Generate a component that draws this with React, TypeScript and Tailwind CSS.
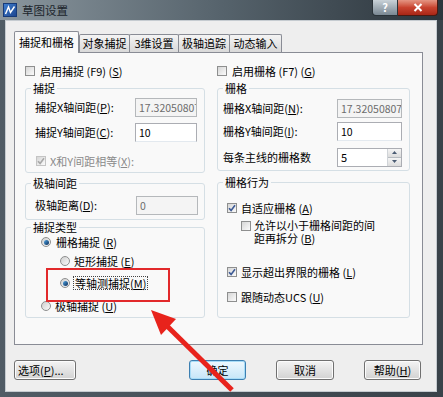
import React from "react"

const Key = ({ k }: { k: string }) => (
  <>
    (<span className="underline">{k}</span>)
  </>
)

function Check({ checked = false, disabled = false }: { checked?: boolean; disabled?: boolean }) {
  return (
    <div
      className={`w-[10px] h-[10px] shrink-0 border flex items-center justify-center bg-linear-to-br from-[#d6d6d6] to-[#fbfbfb] ${
        disabled ? "border-[#c4c4c4]" : "border-[#8e8f8f]"
      }`}
    >
      {checked && (
        <svg width="8" height="8" viewBox="0 0 8 8">
          <path
            d="M1 4.2 L3.1 6.4 L7 1.3"
            fill="none"
            stroke={disabled ? "#a8a8a8" : "#3d5a95"}
            strokeWidth="1.6"
          />
        </svg>
      )}
    </div>
  )
}

function Radio({ checked = false }: { checked?: boolean }) {
  return (
    <div className="w-[10px] h-[10px] shrink-0 rounded-full border border-[#8e8f8f] bg-linear-to-br from-[#cfcfcf] to-[#fafafa] flex items-center justify-center">
      {checked && <div className="w-[5px] h-[5px] rounded-full bg-linear-to-br from-[#4fa6e6] to-[#0f2f5a]" />}
    </div>
  )
}

function Field({ value, disabled = false, width }: { value: string; disabled?: boolean; width: string }) {
  return (
    <div
      className={`${width} h-[19px] shrink-0 border overflow-hidden whitespace-nowrap pl-[3px] text-[10.5px] leading-[17px] ${
        disabled ? "bg-[#f4f4f4] border-[#b5b8bb] text-[#6d6d6d]" : "bg-white border-[#abadb3] border-b-[#e3e9ef] text-black"
      }`}
    >
      {value}
    </div>
  )
}

function Group({ title, className, children }: { title: string; className: string; children: React.ReactNode }) {
  return (
    <fieldset className={`border border-[#d5dfe5] rounded-[3px] ${className}`}>
      <legend className="ml-[5px] px-[2px] text-[11px] leading-[14px]">{title}</legend>
      {children}
    </fieldset>
  )
}

function Tab({ label, width, active = false }: { label: string; width: string; active?: boolean }) {
  if (active) {
    return (
      <div className={`${width} h-[22px] border border-b-0 border-[#898c95] rounded-t-[2px] bg-[#f9f9f9] flex items-center justify-center text-[11px]`}>
        {label}
      </div>
    )
  }
  return (
    <div
      className={`${width} h-[18px] mb-px -ml-px first:ml-0 border border-b-0 border-[#898c95] rounded-t-[2px] bg-linear-to-b from-[#f4f4f4] to-[#d9d9d9] flex items-center justify-center text-[11px]`}
    >
      {label}
    </div>
  )
}

function Button({ children, width, primary = false }: { children: React.ReactNode; width: string; primary?: boolean }) {
  return (
    <div
      className={`${width} h-[20px] rounded-[3px] border flex items-center justify-center text-[11px] ${
        primary
          ? "border-[#3c7fb1] bg-linear-to-b from-[#eef8fe] to-[#c6e6f8] shadow-[inset_0_0_0_1px_#a7dcf7]"
          : "border-[#707070] bg-linear-to-b from-[#f4f4f4] to-[#d2d2d2] shadow-[inset_0_0_0_1px_#fcfcfc]"
      }`}
    >
      {children}
    </div>
  )
}

export default function App() {
  return (
    <div className="relative w-[443px] h-[397px] flex flex-col bg-linear-to-r from-[#505c65] to-[#394249] font-['Noto_Sans_CJK_SC',sans-serif] text-black select-none">
      {/* title bar */}
      <div className="h-[20px] flex shrink-0 bg-linear-to-r from-[#8a969e] via-[#56636c] to-[#2c353c]">
        <div className="mt-[3px] ml-[3px] w-[14px] h-[14px] bg-linear-to-br from-[#3f7fd0] to-[#1d4690] border border-[#163a78] flex items-center justify-center">
          <svg width="12" height="12" viewBox="0 0 12 12">
            <path d="M1.5 10 L4.5 3 L6.5 8.5 L10.5 2.5" fill="none" stroke="#fff" strokeWidth="1.4" />
          </svg>
        </div>
        <div className="ml-[5px] mt-[2px] text-[11.5px] leading-[16px] text-[#1b242b]">草图设置</div>
        <div className="ml-auto mr-[5px] flex items-start">
          <div className="w-[26px] h-[16px] rounded-bl-[4px] border border-t-0 border-[#2a3339] bg-linear-to-b from-[#c9d2d8] to-[#7a8893] flex items-center justify-center text-white text-[11px] font-bold leading-none">
            ?
          </div>
          <div className="w-[40px] h-[16px] rounded-br-[4px] border border-t-0 border-l-0 border-[#4a1a12] bg-linear-to-b from-[#e49583] via-[#c8432f] to-[#a92616] flex items-center justify-center">
            <svg width="10" height="9" viewBox="0 0 10 9">
              <path d="M1.5 1 L8.5 8 M8.5 1 L1.5 8" stroke="#fff" strokeWidth="2" />
            </svg>
          </div>
        </div>
      </div>

      {/* client area */}
      <div className="flex-1 ml-[5px] mr-[6px] mb-[5px] bg-[#eeeeee] border border-[#c5cbd0] pt-[10px] pl-[8px] pr-[13px] flex flex-col">
        <div className="flex items-end h-[22px] -mb-px relative z-10">
          <Tab label="捕捉和栅格" width="w-[65px]" active />
          <div className="flex items-end">
            <Tab label="对象捕捉" width="w-[51px]" />
            <Tab label="3维设置" width="w-[50px]" />
            <Tab label="极轴追踪" width="w-[52px]" />
            <Tab label="动态输入" width="w-[53px]" />
          </div>
        </div>

        <div className="h-[293px] border border-[#898c95] bg-[#f9f9f9] pt-[10px] pl-[10px] pr-[12px] grid grid-cols-[180px_193px] gap-x-[12px] items-start text-[11px] leading-[13px]">
          {/* left column */}
          <div className="flex flex-col">
            <div className="h-[16px] flex items-center gap-[5px]">
              <Check />
              <span>
                启用捕捉 (F9) <Key k="S" />
              </span>
            </div>

            <Group title="捕捉" className="mt-[2px] h-[92px]">
              <div className="pl-[9px] pr-[7px] flex flex-col">
                <div className="mt-[2px] h-[20px] flex items-center">
                  <span className="flex-1">
                    捕捉X轴间距<Key k="P" />:
                  </span>
                  <Field value="17.32050807" disabled width="w-[62px]" />
                </div>
                <div className="mt-[5px] h-[20px] flex items-center">
                  <span className="flex-1">
                    捕捉Y轴间距<Key k="C" />:
                  </span>
                  <Field value="10" width="w-[62px]" />
                </div>
                <div className="mt-[11px] h-[16px] pl-[1px] flex items-center gap-[4px] text-[#8a8a8a]">
                  <Check checked disabled />
                  <span>
                    X和Y间距相等<Key k="X" />:
                  </span>
                </div>
              </div>
            </Group>

            <Group title="极轴间距" className="mt-[3px] h-[44px]">
              <div className="pl-[9px] pr-[6px]">
                <div className="mt-[5px] h-[20px] flex items-center">
                  <span className="flex-1">
                    极轴距离<Key k="D" />:
                  </span>
                  <Field value="0" disabled width="w-[62px]" />
                </div>
              </div>
            </Group>

            <Group title="捕捉类型" className="h-[98px]">
              <div className="pl-[15px] flex flex-col">
                <div className="h-[16px] flex items-center gap-[5px]">
                  <Radio checked />
                  <span>
                    栅格捕捉 <Key k="R" />
                  </span>
                </div>
                <div className="mt-[3px] h-[16px] pl-[19px] flex items-center gap-[4px]">
                  <Radio />
                  <span>
                    矩形捕捉 <Key k="E" />
                  </span>
                </div>
                <div className="mt-[6px] h-[16px] pl-[19px] flex items-center gap-[3px]">
                  <Radio checked />
                  <span className="border border-dotted border-[#444] px-px leading-[12px]">
                    等轴测捕捉<Key k="M" />
                  </span>
                </div>
                <div className="mt-[7px] h-[16px] flex items-center gap-[4px]">
                  <Radio />
                  <span>
                    极轴捕捉 <Key k="U" />
                  </span>
                </div>
              </div>
            </Group>
          </div>

          {/* right column */}
          <div className="flex flex-col">
            <div className="h-[16px] flex items-center gap-[5px]">
              <Check />
              <span>
                启用栅格 (F7) <Key k="G" />
              </span>
            </div>

            <Group title="栅格" className="mt-[2px] h-[90px]">
              <div className="pl-[5px] pr-[7px] flex flex-col">
                <div className="mt-[3px] h-[20px] flex items-center">
                  <span className="flex-1">
                    栅格X轴间距<Key k="N" />:
                  </span>
                  <Field value="17.32050807" disabled width="w-[65px]" />
                </div>
                <div className="mt-[3px] h-[20px] flex items-center">
                  <span className="flex-1">
                    栅格Y轴间距<Key k="I" />:
                  </span>
                  <Field value="10" width="w-[65px]" />
                </div>
                <div className="mt-[6px] h-[20px] flex items-center">
                  <span className="flex-1">每条主线的栅格数</span>
                  <div className="w-[65px] h-[19px] border border-[#abadb3] bg-white flex">
                    <span className="flex-1 pl-[3px] leading-[17px]">5</span>
                    <div className="w-[14px] flex flex-col border-l border-[#d0d4d8]">
                      <div className="flex-1 bg-linear-to-b from-[#f5f5f5] to-[#dcdcdc] border-b border-[#b7bcc1] flex items-center justify-center">
                        <svg width="5" height="3" viewBox="0 0 5 3">
                          <path d="M0 3 L2.5 0 L5 3 Z" fill="#4b5c73" />
                        </svg>
                      </div>
                      <div className="flex-1 bg-linear-to-b from-[#f5f5f5] to-[#dcdcdc] flex items-center justify-center">
                        <svg width="5" height="3" viewBox="0 0 5 3">
                          <path d="M0 0 L2.5 3 L5 0 Z" fill="#4b5c73" />
                        </svg>
                      </div>
                    </div>
                  </div>
                </div>
              </div>
            </Group>

            <Group title="栅格行为" className="mt-[4px] h-[143px]">
              <div className="pl-[9px] flex flex-col">
                <div className="mt-[11px] h-[16px] flex items-center gap-[4px]">
                  <Check checked />
                  <span>
                    自适应栅格 <Key k="A" />
                  </span>
                </div>
                <div className="mt-[2px] pl-[14px] flex items-start gap-[3px]">
                  <div className="mt-[3px]">
                    <Check />
                  </div>
                  <span className="mt-[1px] leading-[13px]">
                    允许以小于栅格间距的间
                    <br />
                    距再拆分 <Key k="B" />
                  </span>
                </div>
                <div className="mt-[19px] h-[16px] flex items-center gap-[4px]">
                  <Check checked />
                  <span>
                    显示超出界限的栅格 <Key k="L" />
                  </span>
                </div>
                <div className="mt-[9px] h-[16px] flex items-center gap-[4px]">
                  <Check />
                  <span>
                    跟随动态UCS <Key k="U" />
                  </span>
                </div>
              </div>
            </Group>
          </div>
        </div>

        <div className="mt-[15px] flex">
          <Button width="w-[62px]">
            <span className="w-full pl-[3px] text-left">
              选项<Key k="P" />...
            </span>
          </Button>
          <div className="ml-[113px]">
            <Button width="w-[57px]" primary>
              确定
            </Button>
          </div>
          <div className="ml-[30px]">
            <Button width="w-[58px]">取消</Button>
          </div>
          <div className="ml-[30px]">
            <Button width="w-[57px]">
              帮助<Key k="H" />
            </Button>
          </div>
        </div>
      </div>

      {/* annotation: red box and arrow */}
      <div className="absolute left-[46px] top-[268px] w-[124px] h-[34px] border-2 border-[#e2292b] pointer-events-none" />
      <svg className="absolute left-0 top-0 pointer-events-none" width="443" height="397" viewBox="0 0 443 397">
        <line x1="232" y1="390" x2="166" y2="325" stroke="#e8231c" strokeWidth="5" />
        <polygon points="151,310 176,319 161,335" fill="#e8231c" />
      </svg>
    </div>
  )
}
